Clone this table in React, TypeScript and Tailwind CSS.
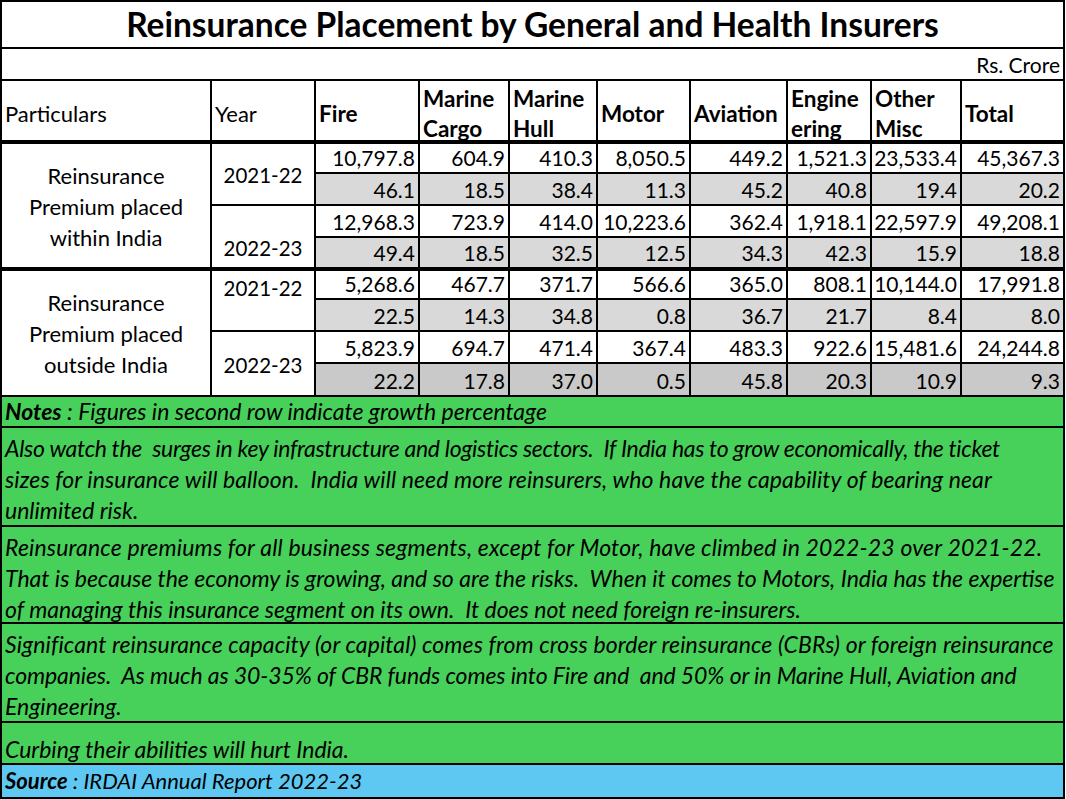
import React from "react";

const rowsData = [
  {
    values: ["10,797.8", "604.9", "410.3", "8,050.5", "449.2", "1,521.3", "23,533.4", "45,367.3"],
    bg: "bg-white",
  },
  {
    values: ["46.1", "18.5", "38.4", "11.3", "45.2", "40.8", "19.4", "20.2"],
    bg: "bg-[#d9d9d9]",
  },
  {
    values: ["12,968.3", "723.9", "414.0", "10,223.6", "362.4", "1,918.1", "22,597.9", "49,208.1"],
    bg: "bg-white",
  },
  {
    values: ["49.4", "18.5", "32.5", "12.5", "34.3", "42.3", "15.9", "18.8"],
    bg: "bg-[#d9d9d9]",
  },
  {
    values: ["5,268.6", "467.7", "371.7", "566.6", "365.0", "808.1", "10,144.0", "17,991.8"],
    bg: "bg-white",
  },
  {
    values: ["22.5", "14.3", "34.8", "0.8", "36.7", "21.7", "8.4", "8.0"],
    bg: "bg-[#d9d9d9]",
  },
  {
    values: ["5,823.9", "694.7", "471.4", "367.4", "483.3", "922.6", "15,481.6", "24,244.8"],
    bg: "bg-white",
  },
  {
    values: ["22.2", "17.8", "37.0", "0.5", "45.8", "20.3", "10.9", "9.3"],
    bg: "bg-[#c9c9c9]",
  },
];

function DataRow({ r, idx }: { r: { values: string[]; bg: string }; idx: number }) {
  const bottom = idx === 3 ? "border-b-4" : "border-b-2";
  return (
    <>
      {r.values.map((v, i) => (
        <div
          key={i}
          className={`${r.bg} ${bottom} ${i < 7 ? "border-r-2" : ""} border-black flex items-end justify-end pr-[3px] pb-[1px] text-[21px] leading-[26px] whitespace-nowrap`}
        >
          {v}
        </div>
      ))}
    </>
  );
}

export default function App() {
  const headerBold = [
    ["Fire"],
    ["Marine", "Cargo"],
    ["Marine", "Hull"],
    ["Motor"],
    ["Aviation"],
    ["Engine", "ering"],
    ["Other", "Misc"],
    ["Total"],
  ];
  return (
    <div className="w-[1066px] h-[799px] bg-white font-[Lato,sans-serif] text-[22px] text-black">
      <div className="w-[1065px] border-2 border-black grid grid-cols-[210px_104px_104px_90px_88px_93px_97px_84px_90px_101px] grid-rows-[47px_32px_63px_30px_32px_32px_33px_29px_32px_32px_33px_31px_99px_97px_99px_42px_32px]">
        {/* Title */}
        <div className="col-span-10 border-b-2 border-black flex items-center justify-center font-bold text-[33.5px] leading-none pt-[1px] whitespace-nowrap">
          Reinsurance Placement by General and Health Insurers
        </div>
        {/* Rs Crore */}
        <div className="col-span-10 border-b-2 border-black flex items-center justify-end pr-[3px] pt-[1px] text-[21px]">
          Rs. Crore
        </div>
        {/* Header */}
        <div className="border-r-2 border-b-4 border-black flex items-center pl-[3px] pt-[6px]">Particulars</div>
        <div className="border-r-2 border-b-4 border-black flex items-center pl-[3px] pt-[6px]">Year</div>
        {headerBold.map((lines, i) => (
          <div
            key={i}
            className={`${i < 7 ? "border-r-2" : ""} border-b-4 border-black flex items-center pl-[3px] pt-[6px] font-bold text-[22.5px] leading-[30px] overflow-visible`}
          >
            <div className="flex flex-col whitespace-nowrap">
              {lines.map((l, j) => (
                <span key={j}>{l}</span>
              ))}
            </div>
          </div>
        ))}

        {/* Group 1 */}
        <div className="row-span-4 border-r-2 border-b-4 border-black flex items-center justify-center text-center leading-[31px] pt-[1px]">
          <div>
            Reinsurance
            <br />
            Premium placed
            <br />
            within India
          </div>
        </div>
        <div className="row-span-2 border-r-2 border-b-2 border-black flex items-center justify-center pt-[3px] text-[20.5px]">2021-22</div>
        <DataRow r={rowsData[0]} idx={0} />
        <DataRow r={rowsData[1]} idx={1} />
        <div className="row-span-2 border-r-2 border-b-4 border-black flex items-end justify-center pb-[4px] leading-[30px] text-[20.5px]">2022-23</div>
        <DataRow r={rowsData[2]} idx={2} />
        <DataRow r={rowsData[3]} idx={3} />

        {/* Group 2 */}
        <div className="row-span-4 border-r-2 border-b-2 border-black flex items-center justify-center text-center leading-[31px]">
          <div>
            Reinsurance
            <br />
            Premium placed
            <br />
            outside India
          </div>
        </div>
        <div className="row-span-2 border-r-2 border-b-2 border-black flex items-start justify-center pt-[2px] leading-[30px] text-[20.5px]">2021-22</div>
        <DataRow r={rowsData[4]} idx={4} />
        <DataRow r={rowsData[5]} idx={5} />
        <div className="row-span-2 border-r-2 border-b-2 border-black flex items-center justify-center pt-[4px] text-[20.5px]">2022-23</div>
        <DataRow r={rowsData[6]} idx={6} />
        <DataRow r={rowsData[7]} idx={7} />

        {/* Notes */}
        <div className="col-span-10 border-b-2 border-black bg-[#47d15a] italic text-[23px] pl-[3px] leading-[29px] whitespace-nowrap">
          <span className="font-bold">Notes</span> : Figures in second row indicate growth percentage
        </div>
        <div className="col-span-10 border-b-2 border-black bg-[#47d15a] italic text-[23px] pl-[3px] pt-[5px] leading-[31px] whitespace-nowrap">
          <div className="tracking-[-0.3px]">Also watch the&nbsp; surges in key infrastructure and logistics sectors.&nbsp; If India has to grow economically, the ticket</div>
          <div className="tracking-[0.1px]">sizes for insurance will balloon.&nbsp; India will need more reinsurers, who have the capability of bearing near</div>
          <div>unlimited risk.</div>
        </div>
        <div className="col-span-10 border-b-2 border-black bg-[#47d15a] italic text-[23px] pl-[3px] pt-[5px] leading-[31px] whitespace-nowrap">
          <div className="tracking-[0.17px]">Reinsurance premiums for all business segments, except for Motor, have climbed in 2022-23 over 2021-22.</div>
          <div>That is because the economy is growing, and so are the risks.&nbsp; When it comes to Motors, India has the expertise</div>
          <div>of managing this insurance segment on its own.&nbsp; It does not need foreign re-insurers.</div>
        </div>
        <div className="col-span-10 border-b-2 border-black bg-[#47d15a] italic text-[23px] pl-[3px] pt-[5px] leading-[31px] whitespace-nowrap">
          <div className="tracking-[0.1px]">Significant reinsurance capacity (or capital) comes from cross border reinsurance (CBRs) or foreign reinsurance</div>
          <div className="tracking-[-0.1px]">companies.&nbsp; As much as 30-35% of CBR funds comes into Fire and&nbsp; and 50% or in Marine Hull, Aviation and</div>
          <div>Engineering.</div>
        </div>
        <div className="col-span-10 border-b-2 border-black bg-[#47d15a] italic text-[23px] pl-[3px] flex items-end leading-[28px] whitespace-nowrap">
          Curbing their abilities will hurt India.
        </div>
        <div className="col-span-10 bg-[#5ec8f2] italic pl-[3px] flex items-center leading-[28px] whitespace-nowrap">
          <span>
            <span className="font-bold">Source</span> : IRDAI Annual Report 2022-23
          </span>
        </div>
      </div>
    </div>
  );
}
